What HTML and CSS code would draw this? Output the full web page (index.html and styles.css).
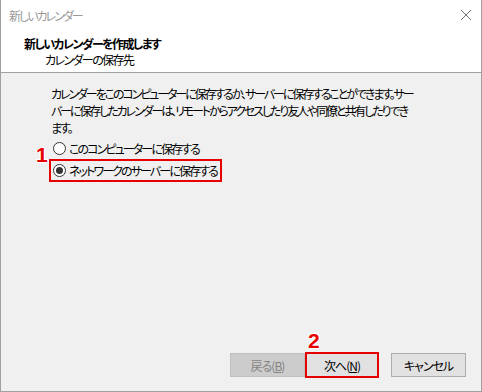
FILE: index.html
```html
<!DOCTYPE html>
<html lang="ja">

<head>
    <meta charset="UTF-8">
    <meta name="viewport" content="width=device-width, initial-scale=1.0">
    <title>新しいカレンダー</title>
    <link rel="stylesheet" href="styles.css">
</head>

<body>
    <div class="window">
        <div class="titlebar">
            <span class="title">新しいカレンダー</span>
            <svg class="close" width="12" height="12" viewBox="0 0 12 12">
                <path d="M1 1L11 11M11 1L1 11" stroke="#707070" stroke-width="1" fill="none" />
            </svg>
        </div>
        <div class="header">
            <p class="head-title">新しいカレンダーを作成します</p>
            <p class="head-sub">カレンダーの保存先</p>
        </div>
        <div class="content">
            <p class="desc">カレンダーをこのコンピューターに保存するか、サーバーに保存することができます。サー<br>バーに保存したカレンダーは、リモートからアクセスしたり友人や同僚と共有したりでき<br>ます。</p>
            <div class="options">
                <label class="option">
                    <span class="radio"></span>
                    <span>このコンピューターに保存する</span>
                </label>
                <label class="option marked">
                    <span class="radio checked"></span>
                    <span>ネットワークのサーバーに保存する</span>
                    <span class="step step1">1</span>
                </label>
            </div>
            <div class="buttons">
                <div class="btn disabled">戻る(<u>B</u>)</div>
                <div class="btn marked-btn">次へ(<u>N</u>)<span class="step step2">2</span></div>
                <div class="btn cancel">キャンセル</div>
            </div>
        </div>
    </div>
</body>

</html>
```

FILE: styles.css
```css
* {
    margin: 0;
    padding: 0;
    box-sizing: border-box;
}

body {
    font-family: "Noto Sans CJK JP", sans-serif;
    font-size: 12px;
    font-feature-settings: "palt";
    letter-spacing: -1.6px;
    white-space: nowrap;
    color: #000;
    background-color: #fff;
}

.window {
    width: 482px;
    height: 392px;
    display: flex;
    flex-direction: column;
    border: 1px solid #a0a0a0;
    border-top: 0;
}

.titlebar {
    height: 30px;
    display: flex;
    align-items: center;
    justify-content: space-between;
    padding: 0 9px 0 8px;
    background-color: #fff;
}

.title {
    color: #999;
    line-height: 17px;
    letter-spacing: -2px;
}

.close {
    display: block;
}

.header {
    height: 43px;
    background-color: #fff;
    border-bottom: 1px solid #a0a0a0;
    padding: 5px 0 0 23px;
}

.head-title {
    font-weight: bold;
    line-height: 17px;
}

.head-sub {
    padding-left: 21px;
    line-height: 15px;
}

.content {
    flex: 1;
    background-color: #f0f0f0;
    display: flex;
    flex-direction: column;
    padding: 12px 15px 13px 0;
}

.desc {
    padding-left: 50px;
    line-height: 17px;
    letter-spacing: -2.1px;
}

.options {
    margin-top: 2px;
    padding-left: 48px;
    display: flex;
    flex-direction: column;
    align-items: flex-start;
}

.option {
    display: flex;
    align-items: center;
    gap: 3px;
    height: 21px;
    padding: 0 4px;
    position: relative;
    letter-spacing: -1.9px;
}

.option.marked {
    height: 23px;
    border: 2px solid #e60000;
    padding: 0 3px 0 2px;
}

.radio {
    width: 13px;
    height: 13px;
    border: 1px solid #333;
    border-radius: 50%;
    background-color: #fff;
    display: flex;
    align-items: center;
    justify-content: center;
}

.radio.checked::after {
    content: "";
    width: 7px;
    height: 7px;
    border-radius: 50%;
    background-color: #333;
}

.step {
    position: absolute;
    font-family: "Liberation Sans", Arial, sans-serif;
    font-size: 21px;
    font-weight: bold;
    line-height: 20px;
    letter-spacing: 0;
    color: #e60000;
    text-shadow: 1px 0 #fff, -1px 0 #fff, 0 1px #fff, 0 -1px #fff, 1px 1px #fff, -1px -1px #fff, 1px -1px #fff, -1px 1px #fff;
}

.step1 {
    left: -15px;
    top: -16px;
}

.step2 {
    left: 1px;
    top: -23px;
}

.buttons {
    margin-top: auto;
    display: flex;
    justify-content: flex-end;
    align-items: center;
}

.btn {
    width: 75px;
    height: 24px;
    display: flex;
    align-items: center;
    justify-content: center;
    background-color: #e1e1e1;
    border: 1px solid #adadad;
    position: relative;
    letter-spacing: -1px;
}

.btn u {
    text-underline-offset: 1px;
}

.btn.disabled {
    background-color: #ccc;
    border-color: #bfbfbf;
    color: #838383;
}

.btn.marked-btn {
    width: 74px;
    height: 26px;
    border: 2px solid #e60000;
}

.btn.cancel {
    margin-left: 12px;
}
```
